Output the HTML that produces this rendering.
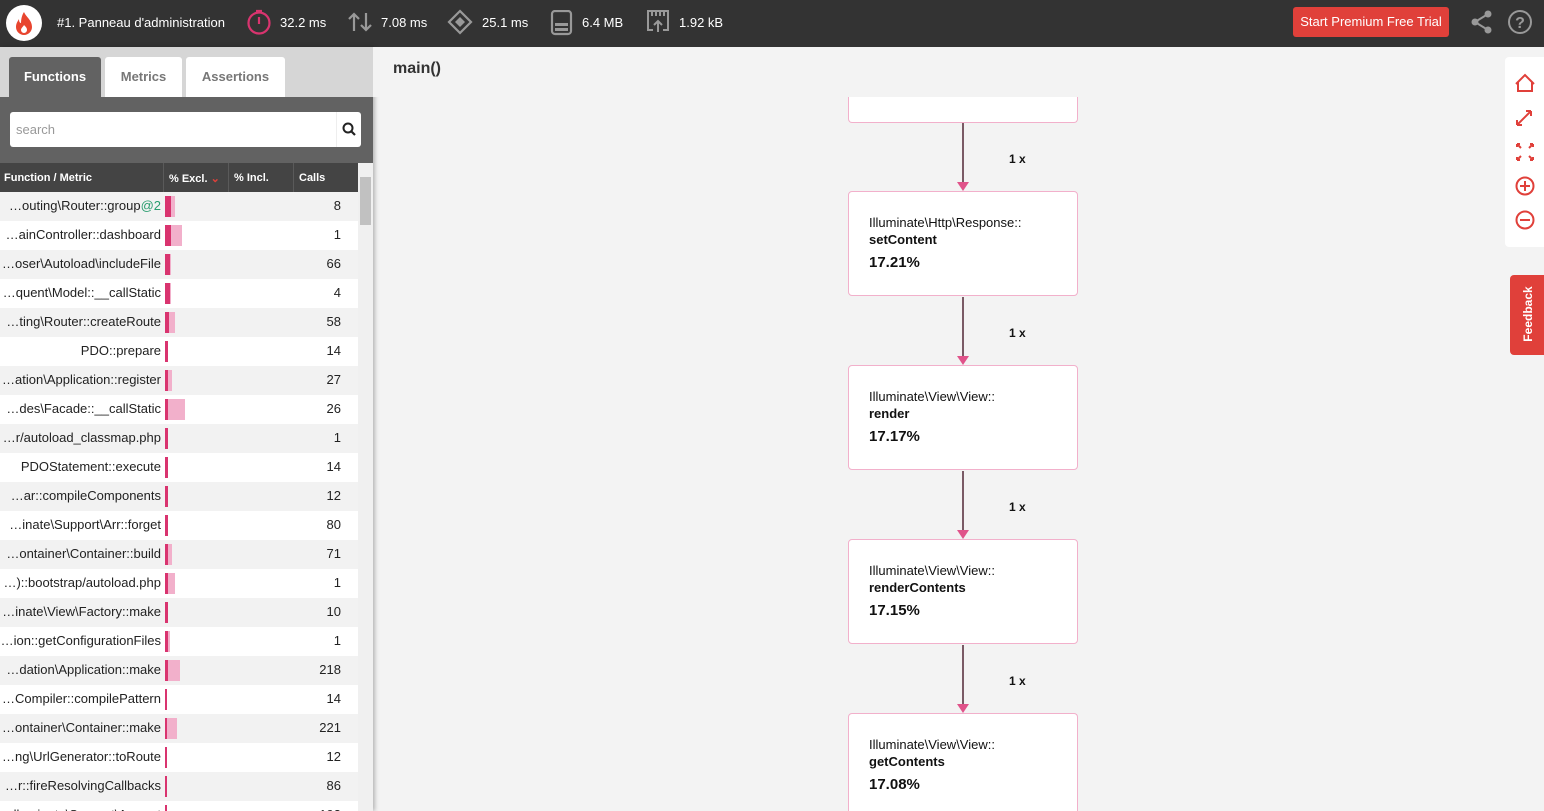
<!DOCTYPE html>
<html><head><meta charset="utf-8"><style>
*{box-sizing:border-box;margin:0;padding:0}
html,body{width:1544px;height:811px;overflow:hidden}
body{background:#f3f3f3;font-family:"Liberation Sans",Arial,sans-serif;position:relative}
.top{position:absolute;left:0;top:0;width:1544px;height:47px;background:#333;color:#fff;font-size:13px}
.top .t{position:absolute;top:15px}
.left{position:absolute;left:0;top:47px;width:373px;height:764px;background:#d6d6d6;box-shadow:2px 0 4px rgba(0,0,0,.25);overflow:hidden}
.tab{position:absolute;top:10px;height:40px;background:#fff;border-radius:3px 3px 0 0;font-size:13px;font-weight:bold;color:#777;text-align:center;line-height:40px}
.dark{position:absolute;left:0;top:50px;width:373px;height:66px;background:#626262}
.search{position:absolute;left:10px;top:15px;width:351px;height:35px;background:#fff;border-radius:3px;font-size:13px;color:#999;padding:10px 6px}
.hdr{position:absolute;left:0;top:116px;width:358px;height:29px;background:#444;color:#fff;font-size:11px;font-weight:bold}
.hdr span{position:absolute;top:9px}
.hdr i{position:absolute;top:0;width:1px;height:29px;background:#5a5a5a}
.rows{position:absolute;left:0;top:145px;width:358px}
.row{position:relative;height:29px;font-size:13px;color:#222}
.row:nth-child(odd){background:#f2f2f2}.row:nth-child(even){background:#fff}
.fn{position:absolute;right:197px;top:6px;white-space:nowrap}
.cl{position:absolute;right:17px;top:6px}
.bl{position:absolute;left:165px;top:4px;height:21px;background:#f2b0cb}
.bd{position:absolute;left:165px;top:4px;height:21px;background:#d9346f}
.sb{position:absolute;left:358px;top:116px;width:15px;height:648px;background:#f0f0f0}
.node{position:absolute;left:848px;width:230px;height:105px;background:#fff;border:1px solid #f2b0cb;border-radius:4px;font-size:13px;color:#111;padding:22px 0 0 20px;line-height:17px}
.node b.p{display:block;font-size:15px;margin-top:6px}
.ln{position:absolute;left:962px;width:2px;background:#7a5a65}
.ar{position:absolute;left:957px;width:0;height:0;border-left:6px solid transparent;border-right:6px solid transparent;border-top:9px solid #e0538a}
.x{position:absolute;left:1009px;font-size:12px;font-weight:bold;color:#111}
</style></head><body>
<div class="top">
<div style="position:absolute;left:6px;top:5px;width:36px;height:36px;border-radius:50%;background:#fff"><svg width="36" height="36" viewBox="0 0 36 36"><path d="M18 7c2 5 8 8 8 15a8 8 0 0 1-16 0c0-4 2-6 3-8 0 3 1 4 2 4 0-4 1-8 3-11z" fill="#e8452f"/><path d="M18 20c2 2 3 3 3 5a3 3 0 0 1-6 0c0-2 2-3 3-5z" fill="#fff"/></svg></div>
<span class="t" style="left:57px">#1. Panneau d'administration</span>
<svg style="position:absolute;left:246px;top:8px" width="26" height="28"><circle cx="13" cy="15" r="10.5" fill="none" stroke="#d9346f" stroke-width="2.2"/><path d="M13 9v7M10 3h6" stroke="#d9346f" stroke-width="2.2"/></svg>
<span class="t" style="left:280px">32.2 ms</span>
<svg style="position:absolute;left:347px;top:11px" width="26" height="22"><path d="M7 20V3M2 8l5-5 5 5M19 2v17M14 14l5 5 5-5" stroke="#999" stroke-width="2.2" fill="none"/></svg>
<span class="t" style="left:381px">7.08 ms</span>
<svg style="position:absolute;left:447px;top:9px" width="26" height="26"><path d="M13 2l11 11-11 11L2 13z" fill="none" stroke="#999" stroke-width="2.2"/><path d="M13 8l5 5-5 5-5-5z" fill="#999"/></svg>
<span class="t" style="left:482px">25.1 ms</span>
<svg style="position:absolute;left:550px;top:10px" width="24" height="26"><rect x="2" y="1" width="19" height="23" rx="3" fill="none" stroke="#999" stroke-width="2.2"/><rect x="5" y="13" width="13" height="3" fill="#999"/><rect x="5" y="18" width="13" height="3" fill="#999"/></svg>
<span class="t" style="left:582px">6.4 MB</span>
<svg style="position:absolute;left:645px;top:8px" width="26" height="26"><path d="M8 22H3V3h20v19h-5M7 3v5M11 3v5M15 3v5M19 3v5M13 24V13M9 17l4-4 4 4" fill="none" stroke="#999" stroke-width="2"/></svg>
<span class="t" style="left:679px">1.92 kB</span>
<div style="position:absolute;left:1293px;top:7px;width:156px;height:30px;background:#e0403a;border-radius:3px;font-size:13px;line-height:30px;text-align:center">Start Premium Free Trial</div>
<svg style="position:absolute;left:1470px;top:10px" width="24" height="24"><circle cx="18" cy="4" r="3.5" fill="#999"/><circle cx="5" cy="12" r="3.5" fill="#999"/><circle cx="18" cy="20" r="3.5" fill="#999"/><path d="M18 4L5 12l13 8" stroke="#999" stroke-width="2" fill="none"/></svg>
<svg style="position:absolute;left:1507px;top:9px" width="26" height="26"><circle cx="13" cy="13" r="11" fill="none" stroke="#999" stroke-width="2"/><text x="13" y="19" font-size="16" font-weight="bold" fill="#999" text-anchor="middle" font-family="Liberation Sans">?</text></svg>
</div>
<div class="left">
<div class="tab" style="left:9px;width:92px;background:#626262;color:#fff">Functions</div>
<div class="tab" style="left:105px;width:77px">Metrics</div>
<div class="tab" style="left:186px;width:99px">Assertions</div>
<div class="dark"><div class="search">search<svg style="position:absolute;right:0;top:0;border-left:1px solid #eee" width="25" height="35"><circle cx="11" cy="16" r="4.5" fill="none" stroke="#222" stroke-width="2"/><path d="M14 19l4 4" stroke="#222" stroke-width="2.2"/></svg></div></div>
<div class="hdr"><span style="left:4px">Function / Metric</span><i style="left:163px"></i><span style="left:169px">% Excl. <span style="color:#e0403a;position:static">⌄</span></span><i style="left:228px"></i><span style="left:234px">% Incl.</span><i style="left:293px"></i><span style="left:299px">Calls</span></div>
<div class="rows">
<div class="row"><span class="fn">…outing\Router::group<span style="color:#2a9d6f">@2</span></span><i class="bl" style="width:10px"></i><i class="bd" style="width:6px"></i><span class="cl">8</span></div>
<div class="row"><span class="fn">…ainController::dashboard</span><i class="bl" style="width:17px"></i><i class="bd" style="width:6px"></i><span class="cl">1</span></div>
<div class="row"><span class="fn">…oser\Autoload\includeFile</span><i class="bl" style="width:6px"></i><i class="bd" style="width:5px"></i><span class="cl">66</span></div>
<div class="row"><span class="fn">…quent\Model::__callStatic</span><i class="bl" style="width:6px"></i><i class="bd" style="width:5px"></i><span class="cl">4</span></div>
<div class="row"><span class="fn">…ting\Router::createRoute</span><i class="bl" style="width:10px"></i><i class="bd" style="width:4px"></i><span class="cl">58</span></div>
<div class="row"><span class="fn">PDO::prepare</span><i class="bl" style="width:3px"></i><i class="bd" style="width:3px"></i><span class="cl">14</span></div>
<div class="row"><span class="fn">…ation\Application::register</span><i class="bl" style="width:7px"></i><i class="bd" style="width:3px"></i><span class="cl">27</span></div>
<div class="row"><span class="fn">…des\Facade::__callStatic</span><i class="bl" style="width:20px"></i><i class="bd" style="width:3px"></i><span class="cl">26</span></div>
<div class="row"><span class="fn">…r/autoload_classmap.php</span><i class="bl" style="width:3px"></i><i class="bd" style="width:3px"></i><span class="cl">1</span></div>
<div class="row"><span class="fn">PDOStatement::execute</span><i class="bl" style="width:3px"></i><i class="bd" style="width:3px"></i><span class="cl">14</span></div>
<div class="row"><span class="fn">…ar::compileComponents</span><i class="bl" style="width:3px"></i><i class="bd" style="width:3px"></i><span class="cl">12</span></div>
<div class="row"><span class="fn">…inate\Support\Arr::forget</span><i class="bl" style="width:3px"></i><i class="bd" style="width:3px"></i><span class="cl">80</span></div>
<div class="row"><span class="fn">…ontainer\Container::build</span><i class="bl" style="width:7px"></i><i class="bd" style="width:3px"></i><span class="cl">71</span></div>
<div class="row"><span class="fn">…)::bootstrap/autoload.php</span><i class="bl" style="width:10px"></i><i class="bd" style="width:3px"></i><span class="cl">1</span></div>
<div class="row"><span class="fn">…inate\View\Factory::make</span><i class="bl" style="width:3px"></i><i class="bd" style="width:3px"></i><span class="cl">10</span></div>
<div class="row"><span class="fn">…ion::getConfigurationFiles</span><i class="bl" style="width:5px"></i><i class="bd" style="width:3px"></i><span class="cl">1</span></div>
<div class="row"><span class="fn">…dation\Application::make</span><i class="bl" style="width:15px"></i><i class="bd" style="width:3px"></i><span class="cl">218</span></div>
<div class="row"><span class="fn">…Compiler::compilePattern</span><i class="bl" style="width:2px"></i><i class="bd" style="width:2px"></i><span class="cl">14</span></div>
<div class="row"><span class="fn">…ontainer\Container::make</span><i class="bl" style="width:12px"></i><i class="bd" style="width:2px"></i><span class="cl">221</span></div>
<div class="row"><span class="fn">…ng\UrlGenerator::toRoute</span><i class="bl" style="width:2px"></i><i class="bd" style="width:2px"></i><span class="cl">12</span></div>
<div class="row"><span class="fn">…r::fireResolvingCallbacks</span><i class="bl" style="width:2px"></i><i class="bd" style="width:2px"></i><span class="cl">86</span></div>
<div class="row"><span class="fn">…lluminate\Support\Arr::get</span><i class="bl" style="width:2px"></i><i class="bd" style="width:2px"></i><span class="cl">193</span></div>
</div>
<div class="sb"><div style="position:absolute;left:2px;top:14px;width:11px;height:48px;background:#c1c1c1"></div></div>
</div>
<div class="node" style="top:70px;height:53px;border-top:none;border-radius:0 0 4px 4px"></div>
<div style="position:absolute;left:373px;top:47px;width:1120px;height:50px;background:#f3f3f3"></div>
<div style="position:absolute;left:393px;top:60px;font-size:16px;font-weight:bold;color:#333">main()</div>
<div class="ln" style="top:123px;height:60px"></div><i class="ar" style="top:182px"></i><span class="x" style="top:152px">1 x</span>
<div class="node" style="top:191px">Illuminate\Http\Response::<br><b>setContent</b><b class="p">17.21%</b></div>
<div class="ln" style="top:297px;height:60px"></div><i class="ar" style="top:356px"></i><span class="x" style="top:326px">1 x</span>
<div class="node" style="top:365px">Illuminate\View\View::<br><b>render</b><b class="p">17.17%</b></div>
<div class="ln" style="top:471px;height:60px"></div><i class="ar" style="top:530px"></i><span class="x" style="top:500px">1 x</span>
<div class="node" style="top:539px">Illuminate\View\View::<br><b>renderContents</b><b class="p">17.15%</b></div>
<div class="ln" style="top:645px;height:60px"></div><i class="ar" style="top:704px"></i><span class="x" style="top:674px">1 x</span>
<div class="node" style="top:713px;height:98px;border-bottom:none;border-radius:4px 4px 0 0">Illuminate\View\View::<br><b>getContents</b><b class="p">17.08%</b></div>
<div style="position:absolute;left:1505px;top:57px;width:39px;height:190px;background:#fff;border-radius:4px 0 0 4px">
<svg width="39" height="190" fill="none" stroke="#e0403a" stroke-width="2"><path d="M11 27l9-9 9 9M13 25v9h14v-9"/><path d="M12 68l14-14M12 68v-5M12 68h5M26 54h-5M26 54v5"/><path d="M12 87l4 4M12 87v3M12 87h3M28 87l-4 4M28 87v3M28 87h-3M12 103l4-4M12 103v-3M12 103h3M28 103l-4-4M28 103v-3M28 103h-3"/><circle cx="20" cy="129" r="8.5"/><path d="M15 129h10M20 124v10"/><circle cx="20" cy="163" r="8.5"/><path d="M15 163h10"/></svg></div>
<div style="position:absolute;left:1510px;top:275px;width:34px;height:80px;background:#e0403a;border-radius:4px 0 0 4px"><div style="position:absolute;left:-10px;top:32px;width:56px;transform:rotate(-90deg);color:#fff;font-size:12px;font-weight:bold;text-align:center">Feedback</div></div>
</body></html>
